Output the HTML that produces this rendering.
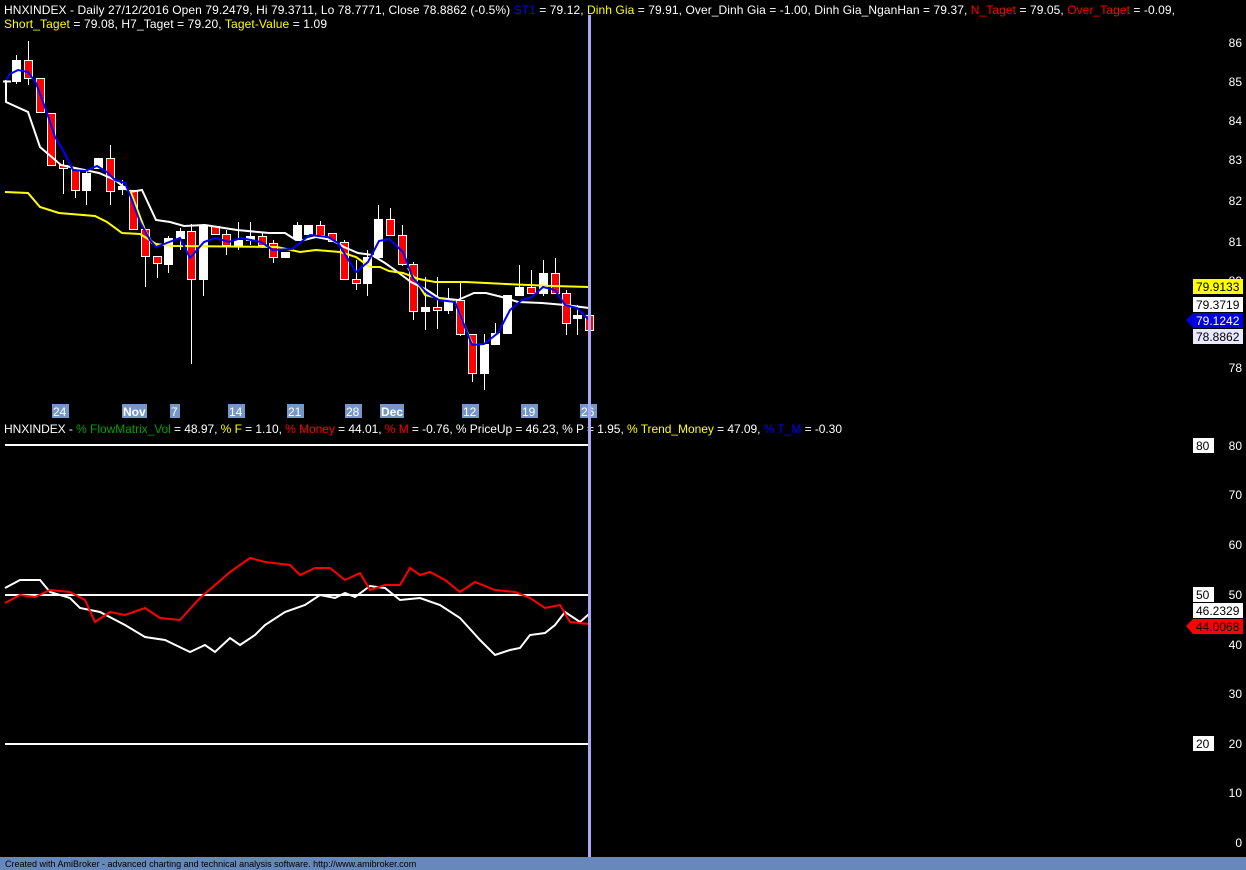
<!DOCTYPE html>
<html><head><meta charset="utf-8"><style>
html,body{margin:0;padding:0;background:#000;width:1246px;height:870px;overflow:hidden;font-family:"Liberation Sans",sans-serif}
svg text{font-family:"Liberation Sans",sans-serif}
</style></head><body>
<svg width="1246" height="870" viewBox="0 0 1246 870" xmlns="http://www.w3.org/2000/svg" style="position:absolute;left:0;top:0">
<rect width="1246" height="870" fill="#000"/>
<!-- title -->
<text x="4" y="14" font-size="12" fill="#fff" textLength="1171" lengthAdjust="spacing">HNXINDEX - Daily 27/12/2016 Open 79.2479, Hi 79.3711, Lo 78.7771, Close 78.8862 (-0.5%) <tspan fill="#0000ff">ST1</tspan> = 79.12, <tspan fill="#ffff00">Dinh Gia</tspan> = 79.91, Over_Dinh Gia = -1.00, Dinh Gia_NganHan = 79.37, <tspan fill="#ff0000">N_Taget</tspan> = 79.05, <tspan fill="#ff0000">Over_Taget</tspan> = -0.09,</text>
<text x="4" y="28" font-size="12" fill="#fff" textLength="323" lengthAdjust="spacing"><tspan fill="#ffff00">Short_Taget</tspan> = 79.08, H7_Taget = 79.20, <tspan fill="#ffff00">Taget-Value</tspan> = 1.09</text>

<!-- wicks -->
<g stroke="#fff" stroke-width="1">
<line x1="16.5" y1="55" x2="16.5" y2="84"/><line x1="28.5" y1="41" x2="28.5" y2="85"/>
<line x1="63.5" y1="160" x2="63.5" y2="194"/><line x1="75.5" y1="168" x2="75.5" y2="198"/><line x1="86.5" y1="170" x2="86.5" y2="205"/>
<line x1="110.5" y1="145" x2="110.5" y2="205"/><line x1="122.5" y1="180" x2="122.5" y2="195"/>
<line x1="145.5" y1="229" x2="145.5" y2="287"/><line x1="157.5" y1="257" x2="157.5" y2="278"/><line x1="168.5" y1="236" x2="168.5" y2="273"/>
<line x1="180.5" y1="228" x2="180.5" y2="250"/><line x1="191.5" y1="224" x2="191.5" y2="364"/><line x1="203.5" y1="224" x2="203.5" y2="296"/>
<line x1="226.5" y1="230" x2="226.5" y2="255"/><line x1="238.5" y1="222" x2="238.5" y2="250"/><line x1="250.5" y1="222" x2="250.5" y2="245"/>
<line x1="262.5" y1="232" x2="262.5" y2="248"/><line x1="273.5" y1="240" x2="273.5" y2="263"/><line x1="297.5" y1="222" x2="297.5" y2="240"/>
<line x1="320.5" y1="221" x2="320.5" y2="236"/><line x1="344.5" y1="240" x2="344.5" y2="280"/><line x1="356.5" y1="260" x2="356.5" y2="290"/>
<line x1="367.5" y1="250" x2="367.5" y2="296"/><line x1="378.5" y1="205" x2="378.5" y2="258"/><line x1="390.5" y1="208" x2="390.5" y2="236"/>
<line x1="402.5" y1="225" x2="402.5" y2="266"/><line x1="413.5" y1="262" x2="413.5" y2="320"/><line x1="425.5" y1="277" x2="425.5" y2="330"/>
<line x1="437.5" y1="277" x2="437.5" y2="329"/><line x1="448.5" y1="288" x2="448.5" y2="314"/><line x1="460.5" y1="283" x2="460.5" y2="336"/>
<line x1="472.5" y1="334" x2="472.5" y2="382"/><line x1="484.5" y1="334" x2="484.5" y2="390"/><line x1="495.5" y1="323" x2="495.5" y2="345"/>
<line x1="519.5" y1="265" x2="519.5" y2="296"/><line x1="531.5" y1="270" x2="531.5" y2="294"/><line x1="543.5" y1="260" x2="543.5" y2="296"/>
<line x1="555.5" y1="258" x2="555.5" y2="294"/><line x1="566.5" y1="290" x2="566.5" y2="335"/><line x1="577.5" y1="305" x2="577.5" y2="335"/>
</g>
<!-- candles -->
<g stroke="#fff" stroke-width="1">
<rect x="12.5" y="60.5" width="8" height="21" fill="#fff"/>
<rect x="24.5" y="60.5" width="8" height="18" fill="#f00"/>
<rect x="36.5" y="78.5" width="8" height="34" fill="#f00"/>
<rect x="47.5" y="113.5" width="8" height="52" fill="#f00"/>
<rect x="59.5" y="165.5" width="8" height="3" fill="#f00"/>
<rect x="71.5" y="168.5" width="8" height="22" fill="#f00"/>
<rect x="82.5" y="173.5" width="8" height="17" fill="#fff"/>
<rect x="94.5" y="158.5" width="8" height="10" fill="#fff"/>
<rect x="106.5" y="158.5" width="8" height="33" fill="#f00"/>
<rect x="118.5" y="186.5" width="8" height="3" fill="#fff"/>
<rect x="129.5" y="190.5" width="8" height="39" fill="#f00"/>
<rect x="141.5" y="229.5" width="8" height="27" fill="#f00"/>
<rect x="153.5" y="256.5" width="8" height="7" fill="#f00"/>
<rect x="164.5" y="238.5" width="8" height="26" fill="#fff"/>
<rect x="176.5" y="231.5" width="8" height="7" fill="#fff"/>
<rect x="187.5" y="231.5" width="8" height="48" fill="#f00"/>
<rect x="199.5" y="226.5" width="8" height="53" fill="#fff"/>
<rect x="211.5" y="226.5" width="8" height="8" fill="#f00"/>
<rect x="222.5" y="234.5" width="8" height="11" fill="#f00"/>
<rect x="234.5" y="240.5" width="8" height="5" fill="#fff"/>
<rect x="246.5" y="236.5" width="8" height="4" fill="#fff"/>
<rect x="258.5" y="236.5" width="8" height="9" fill="#f00"/>
<rect x="269.5" y="243.5" width="8" height="14" fill="#f00"/>
<rect x="281.5" y="252.5" width="8" height="5" fill="#fff"/>
<rect x="293.5" y="225.5" width="8" height="13" fill="#fff"/>
<rect x="304.5" y="225.5" width="8" height="9" fill="#fff"/>
<rect x="316.5" y="225.5" width="8" height="10" fill="#f00"/>
<rect x="328.5" y="233.5" width="8" height="8" fill="#f00"/>
<rect x="340.5" y="242.5" width="8" height="37" fill="#f00"/>
<rect x="352.5" y="279.5" width="8" height="4" fill="#f00"/>
<rect x="363.5" y="257.5" width="8" height="26" fill="#fff"/>
<rect x="374.5" y="219.5" width="8" height="38" fill="#fff"/>
<rect x="386.5" y="219.5" width="8" height="16" fill="#f00"/>
<rect x="398.5" y="235.5" width="8" height="29" fill="#f00"/>
<rect x="409.5" y="264.5" width="8" height="47" fill="#f00"/>
<rect x="421.5" y="307.5" width="8" height="4" fill="#fff"/>
<rect x="433.5" y="307.5" width="8" height="3" fill="#f00"/>
<rect x="444.5" y="299.5" width="8" height="11" fill="#fff"/>
<rect x="456.5" y="300.5" width="8" height="34" fill="#f00"/>
<rect x="468.5" y="334.5" width="8" height="39" fill="#f00"/>
<rect x="480.5" y="344.5" width="8" height="29" fill="#fff"/>
<rect x="491.5" y="333.5" width="8" height="11" fill="#fff"/>
<rect x="503.5" y="295.5" width="8" height="38" fill="#fff"/>
<rect x="515.5" y="287.5" width="8" height="8" fill="#fff"/>
<rect x="527.5" y="287.5" width="8" height="6" fill="#f00"/>
<rect x="539.5" y="273.5" width="8" height="20" fill="#fff"/>
<rect x="551.5" y="273.5" width="8" height="20" fill="#f00"/>
<rect x="562.5" y="293.5" width="8" height="30" fill="#f00"/>
<rect x="573.5" y="315.5" width="8" height="3" fill="#fff"/>
<rect x="585.5" y="315.5" width="8" height="15" fill="#f00"/>
</g>
<line x1="3" y1="81.5" x2="11" y2="81.5" stroke="#fff" stroke-width="2"/>

<!-- white line -->
<polyline fill="none" stroke="#fff" stroke-width="2" points="6,80 6,102 28,112 40,147 47,153 61,165 75,168 99,173 115,180 130,192 142,190 156,220 170,222 184,226 205,225 237,230 269,233 285,233 296,240 304,240 316,237 332,240 344,247 358,253 372,255 385,263 395,270 411,282 427,290 439,298 458,300 474,293 486,293 502,297 518,302 542,303 565,305 589,308"/>
<!-- yellow lines -->
<polyline fill="none" stroke="#ff0" stroke-width="2" points="5,192 28,193 40,207 59,213 95,216 107,222 122,233 140,234 156,244 174,246 277,247 300,252 316,250 340,252 356,257 370,267 380,267 389,271 403,273 419,279 435,282 466,282 506,284 553,286 589,287"/>
<polyline fill="none" stroke="#ff0" stroke-width="2" points="130,190 145,230 152,243 158,246"/>
<polyline fill="none" stroke="#ff0" stroke-width="2" points="408,268 425,295 455,302 462,320 472,343"/>
<!-- blue line -->
<polyline fill="none" stroke="#0000ff" stroke-width="2" points="6,80 10,74 18,70 28,72 36,83 47,113 55,137 63,150 73,170 85,171 97,166 107,172 115,180 125,183 132,200 140,222 150,240 156,247 180,238 190,258 204,242 215,238 229,242 241,238 261,242 273,250 292,249 310,235 328,237 338,243 356,272 368,262 379,241 389,239 403,252 413,278 427,293 439,300 455,302 472,345 484,344 498,333 510,310 522,300 532,297 543,287 555,290 565,305 577,308 589,320"/>

<!-- date labels -->
<g fill="#7796c8">
<rect x="52" y="404" width="17" height="14"/><rect x="122" y="404" width="25" height="14"/><rect x="170" y="404" width="10" height="14"/>
<rect x="228" y="404" width="17" height="14"/><rect x="287" y="404" width="17" height="14"/><rect x="345" y="404" width="17" height="14"/>
<rect x="380" y="404" width="24" height="14"/><rect x="462" y="404" width="17" height="14"/><rect x="521" y="404" width="17" height="14"/>
<rect x="580" y="404" width="17" height="14"/>
</g>
<g font-size="12" fill="#fff">
<text x="53" y="416">24</text><text x="123" y="416" font-weight="bold">Nov</text><text x="171" y="416">7</text>
<text x="229" y="416">14</text><text x="288" y="416">21</text><text x="346" y="416">28</text>
<text x="381" y="416" font-weight="bold">Dec</text><text x="463" y="416">12</text><text x="522" y="416">19</text><text x="581" y="416">26</text>
</g>

<!-- indicator title -->
<text x="4" y="433" font-size="12" fill="#fff" textLength="838" lengthAdjust="spacing">HNXINDEX - <tspan fill="#00a000">% FlowMatrix_Vol</tspan> = 48.97, <tspan fill="#ffff00">% F</tspan> = 1.10, <tspan fill="#ff0000">% Money</tspan> = 44.01, <tspan fill="#ff0000">% M</tspan> = -0.76, % PriceUp = 46.23, % P = 1.95, <tspan fill="#ffff00">% Trend_Money</tspan> = 47.09, <tspan fill="#0000ff">% T_M</tspan> = -0.30</text>

<!-- indicator lines -->
<g stroke="#fff" stroke-width="2">
<line x1="5" y1="445" x2="589" y2="445"/><line x1="5" y1="595" x2="589" y2="595"/><line x1="5" y1="744" x2="589" y2="744"/>
</g>
<polyline fill="none" stroke="#fff" stroke-width="2" points="5,588 20,580 40,580 50,592 70,598 80,608 100,612 125,625 145,637 165,640 190,652 205,645 215,652 230,638 240,645 255,635 265,625 285,612 305,605 320,595 335,598 345,593 355,597 370,586 385,588 400,600 420,598 440,605 460,618 480,640 495,655 510,650 520,648 530,635 545,633 555,625 565,612 580,622 589,614"/>
<polyline fill="none" stroke="#f00" stroke-width="2" points="5,603 20,595 35,597 50,590 70,592 85,600 95,622 110,612 125,615 145,608 160,618 180,620 200,598 215,585 230,572 250,558 265,562 290,565 300,575 315,568 330,568 345,580 360,573 370,590 385,585 400,585 410,568 420,575 430,572 445,580 460,592 475,582 495,590 515,592 530,598 545,608 560,605 570,622 589,624"/>

<!-- vertical cursor line -->
<rect x="588" y="15" width="3" height="842" fill="#a8a8f8"/>

<!-- right axis top -->
<g font-size="12" fill="#fff" text-anchor="end">
<text x="1242" y="47">86</text><text x="1242" y="86">85</text><text x="1242" y="125">84</text><text x="1242" y="164">83</text>
<text x="1242" y="205">82</text><text x="1242" y="246">81</text><text x="1242" y="285">80</text><text x="1242" y="372">78</text>
</g>
<rect x="1193" y="279" width="50" height="15" fill="#ff0"/>
<text x="1196" y="291" font-size="12" fill="#000">79.9133</text>
<rect x="1193" y="297" width="50" height="15" fill="#fff"/>
<text x="1196" y="309" font-size="12" fill="#000">79.3719</text>
<polygon points="1186,320 1193,313 1243,313 1243,328 1193,328" fill="#0000e0"/>
<text x="1196" y="325" font-size="12" fill="#fff">79.1242</text>
<rect x="1193" y="329" width="50" height="15" fill="#e8e8ff"/>
<text x="1196" y="341" font-size="12" fill="#000">78.8862</text>

<!-- right axis bottom -->
<g font-size="12" fill="#fff" text-anchor="end">
<text x="1242" y="450">80</text><text x="1242" y="499">70</text><text x="1242" y="549">60</text><text x="1242" y="599">50</text>
<text x="1242" y="649">40</text><text x="1242" y="698">30</text><text x="1242" y="748">20</text><text x="1242" y="797">10</text><text x="1242" y="847">0</text>
</g>
<rect x="1193" y="438" width="21" height="15" fill="#fff"/><text x="1196" y="450" font-size="12" fill="#000">80</text>
<rect x="1193" y="587" width="21" height="15" fill="#fff"/><text x="1196" y="599" font-size="12" fill="#000">50</text>
<rect x="1193" y="736" width="21" height="15" fill="#fff"/><text x="1196" y="748" font-size="12" fill="#000">20</text>
<rect x="1193" y="603" width="50" height="15" fill="#fff"/><text x="1196" y="615" font-size="12" fill="#000">46.2329</text>
<polygon points="1186,626 1193,619 1243,619 1243,634 1193,634" fill="#f00"/>
<text x="1196" y="631" font-size="12" fill="#000">44.0068</text>

<!-- footer -->
<rect x="0" y="857" width="1246" height="13" fill="#6688bb"/>
<text x="5" y="867" font-size="9" fill="#000">Created with AmiBroker - advanced charting and technical analysis software. http://www.amibroker.com</text>
</svg>
</body></html>
